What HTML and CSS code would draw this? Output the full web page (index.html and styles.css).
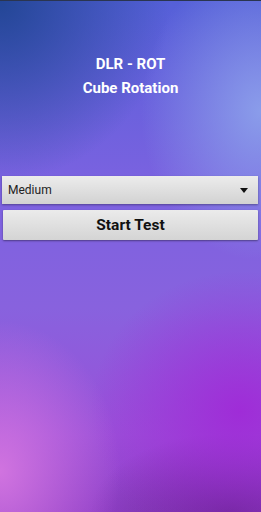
FILE: index.html
```html
<!DOCTYPE html>
<html lang="en">
  <head>
    <meta charset="UTF-8" />
    <meta name="viewport" content="width=device-width, initial-scale=1.0" />
    <title>DLR - ROT</title>
    <link rel="stylesheet" href="styles.css">
  </head>
  <body>
    <div class="screen">
      <!-- Title -->
      <div class="title">
        <div>DLR - ROT</div>
        <div>Cube Rotation</div>
      </div>

      <!-- Controls -->
      <div class="controls">
        <div class="spinner">
          <span>Medium</span>
          <svg width="8" height="5" viewBox="0 0 8 5"><path d="M0 0H8L4 5Z" fill="#111"/></svg>
        </div>
        <button class="start-btn">Start Test</button>
      </div>
    </div>
  </body>
</html>
```

FILE: styles.css
```css
/* General Styles */
body {
  margin: 0;
  font-family: Roboto, "Liberation Sans", sans-serif;
  overflow: hidden;
}

.screen {
  width: 261px;
  height: 512px;
  box-sizing: border-box;
  border-top: 1px solid #2a3550;
  background:
    radial-gradient(ellipse 120px 150px at 0px 470px, rgba(215, 120, 225, 0.9), rgba(215, 120, 225, 0) 100%),
    radial-gradient(ellipse 150px 140px at 240px 410px, rgba(160, 40, 215, 0.9), rgba(160, 40, 215, 0) 100%),
    radial-gradient(ellipse 140px 80px at 230px 512px, rgba(100, 35, 140, 0.8), rgba(100, 35, 140, 0) 100%),
    radial-gradient(ellipse 120px 150px at 261px 110px, rgba(140, 160, 235, 0.95), rgba(140, 160, 235, 0) 100%),
    radial-gradient(ellipse 170px 180px at 0px 0px, rgba(35, 70, 150, 1), rgba(35, 70, 150, 0) 100%),
    linear-gradient(180deg, #5560d8 0%, #7a62e0 35%, #8862de 60%, #9a50d8 85%, #9040c8 100%);
  display: flex;
  flex-direction: column;
}

/* Title */
.title {
  margin-top: 51px;
  text-align: center;
  color: #fff;
  font-weight: bold;
  font-size: 15px;
  line-height: 24px;
}

/* Controls */
.controls {
  margin-top: 76px;
  padding: 0 3px 0 2px;
  display: flex;
  flex-direction: column;
  gap: 6px;
}

.spinner {
  height: 28px;
  display: flex;
  align-items: center;
  justify-content: space-between;
  padding: 0 10px 0 6px;
  background: linear-gradient(180deg, #ececec, #d2d2d2);
  box-shadow: 0 1px 2px rgba(0, 0, 0, 0.35);
  font-size: 12px;
  color: #222;
}

.start-btn {
  height: 30px;
  margin-left: 1px;
  border: none;
  border-radius: 1px;
  background: linear-gradient(180deg, #ebebeb, #d4d4d4);
  box-shadow: 0 1px 2px rgba(0, 0, 0, 0.4);
  font-family: Roboto, "Liberation Sans", sans-serif;
  font-weight: bold;
  font-size: 15.5px;
  color: #111;
}
```
